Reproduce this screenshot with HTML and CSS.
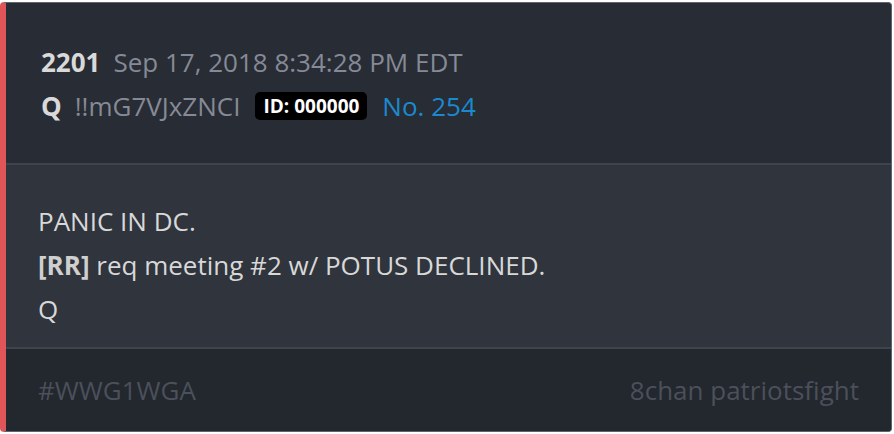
FILE: index.html
```html
<!DOCTYPE html>
<html>
<head>
<meta charset="utf-8">
<link rel="stylesheet" href="styles.css">
</head>
<body>
<div class="card">
  <div class="header">
    <div class="line"><span class="num">2201</span><span class="date">Sep 17, 2018 8:34:28 PM EDT</span></div>
    <div class="line"><span class="name">Q</span><span class="trip">!!mG7VJxZNCI</span><span class="badge">ID: 000000</span><span class="no">No. 254</span></div>
  </div>
  <div class="body">
    <p>PANIC IN DC.</p>
    <p><strong>[RR]</strong> req meeting #2 w/ POTUS DECLINED.</p>
    <p>Q</p>
  </div>
  <div class="footer">
    <span>#WWG1WGA</span>
    <span>8chan patriotsfight</span>
  </div>
</div>
</body>
</html>
```
FILE: styles.css
```css
html, body { margin: 0; padding: 0; background: #ffffff; }
body { width: 894px; height: 434px; font-family: "Open Sans", sans-serif; font-size: 26px; }
.card {
  margin: 2px 2px 0 0;
  height: 430px;
  box-sizing: border-box;
  border: 1px solid #5f646e;
  border-left: 6px solid #e05558;
  border-radius: 4px;
  background: #282c34;
  display: flex;
  flex-direction: column;
  overflow: hidden;
}
.header { padding: 37px 36px 33px 35px; height: 160px; box-sizing: border-box; }
.line { line-height: 44px; display: flex; align-items: center; white-space: nowrap; }
.num, .name { font-weight: 700; color: #d9d9d9; margin-right: 13px; }
.date, .trip { color: #858a96; margin-right: 15px; }
.badge { background: #000; color: #fff; font-weight: 700; font-size: 19px; line-height: 28px; padding: 0 8px; border-radius: 5px; margin-right: 15px; }
.no { color: #1a8ad0; }
.body { background: #2f343d; border-top: 2px solid #3e434c; border-bottom: 2px solid #3e434c; padding: 34px 32px 15px 32px; color: #d8d8d8; height: 186px; box-sizing: border-box; }
.body p { margin: 0; line-height: 44px; }
.body strong { font-weight: 700; color: #cfcfcf; }
.footer { flex: 1; background: #23272e; display: flex; justify-content: space-between; align-items: center; padding: 0 32px 0 32px; color: #4b505a; }
```
